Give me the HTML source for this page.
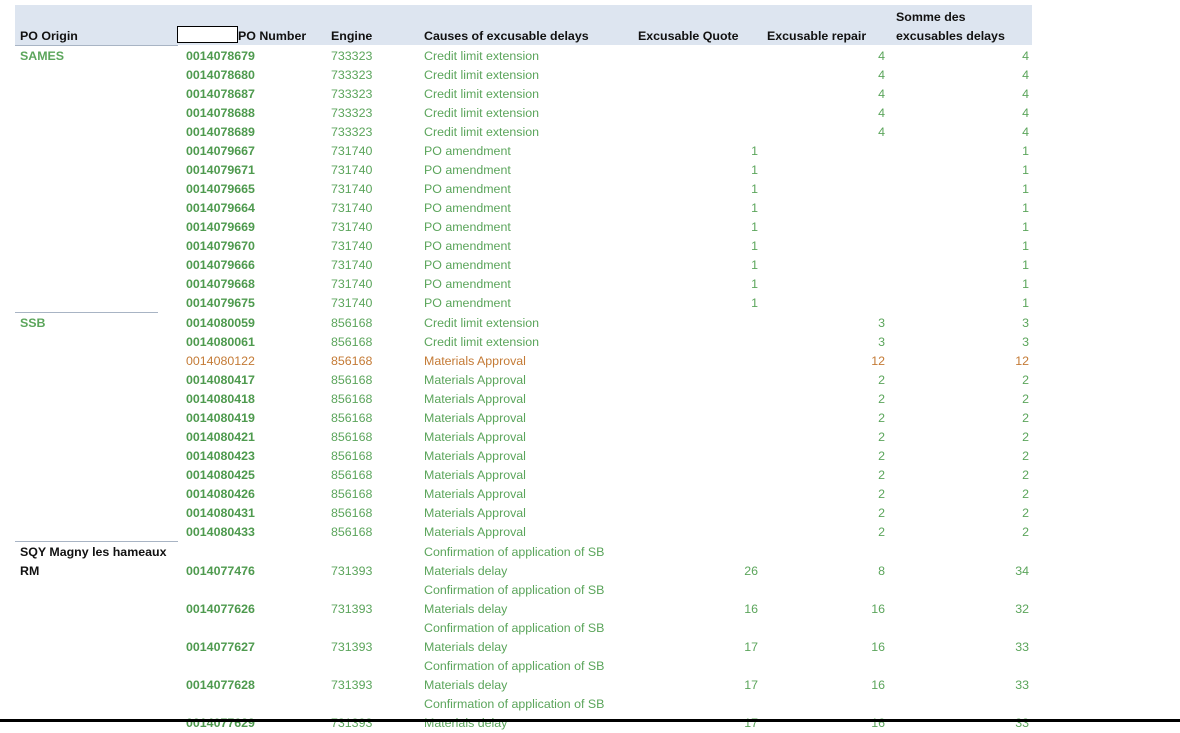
<!DOCTYPE html>
<html><head><meta charset="utf-8"><style>
body{margin:0;width:1180px;height:722px;overflow:hidden;background:#fff;font-family:"Liberation Sans",sans-serif;font-size:12.4px;position:relative}
.hd{position:absolute;left:15px;top:5px;width:1017px;height:40px;background:#dde5f0}
.w{position:absolute;left:0;top:2px;width:1180px;height:722px}
.r{position:absolute;left:0;width:1180px;height:19px;line-height:19px;color:#5ba55b}
.r span{position:absolute;white-space:nowrap}
.o{left:20px;font-weight:bold}
.n{left:186px;font-weight:bold;color:#4e9a4e}
.e{left:331px}.c{left:424px}
.q{right:422px}.p{right:295px}.s{right:151px}
.h{color:#111;font-weight:bold}
.h .n{color:#111}
.or{color:#c47a35}.or .n{color:#c47a35;font-weight:normal}
.k{color:#111}
.ln{position:absolute;height:1px;background:#a8b4c4;left:15px}
</style></head><body>
<div class="hd"></div>
<div class="w">
<div class="r h" style="top:6px"><span style="left:896px">Somme des</span></div>
<div class="r h" style="top:25px"><span class="o">PO Origin</span><span style="left:238px">PO Number</span><span class="e">Engine</span><span class="c">Causes of excusable delays</span><span style="left:638px">Excusable Quote</span><span style="left:767px">Excusable repair</span><span style="left:896px">excusables delays</span></div>
<div style="position:absolute;left:177px;top:24px;width:59px;height:15px;border:1px solid #000;background:#fff"></div>
<div class="ln" style="top:43px;width:163px"></div>
<div class="r" style="top:45px"><span class="o">SAMES</span><span class="n">0014078679</span><span class="e">733323</span><span class="c">Credit limit extension</span><span class="p">4</span><span class="s">4</span></div>
<div class="r" style="top:64px"><span class="n">0014078680</span><span class="e">733323</span><span class="c">Credit limit extension</span><span class="p">4</span><span class="s">4</span></div>
<div class="r" style="top:83px"><span class="n">0014078687</span><span class="e">733323</span><span class="c">Credit limit extension</span><span class="p">4</span><span class="s">4</span></div>
<div class="r" style="top:102px"><span class="n">0014078688</span><span class="e">733323</span><span class="c">Credit limit extension</span><span class="p">4</span><span class="s">4</span></div>
<div class="r" style="top:121px"><span class="n">0014078689</span><span class="e">733323</span><span class="c">Credit limit extension</span><span class="p">4</span><span class="s">4</span></div>
<div class="r" style="top:140px"><span class="n">0014079667</span><span class="e">731740</span><span class="c">PO amendment</span><span class="q">1</span><span class="s">1</span></div>
<div class="r" style="top:159px"><span class="n">0014079671</span><span class="e">731740</span><span class="c">PO amendment</span><span class="q">1</span><span class="s">1</span></div>
<div class="r" style="top:178px"><span class="n">0014079665</span><span class="e">731740</span><span class="c">PO amendment</span><span class="q">1</span><span class="s">1</span></div>
<div class="r" style="top:197px"><span class="n">0014079664</span><span class="e">731740</span><span class="c">PO amendment</span><span class="q">1</span><span class="s">1</span></div>
<div class="r" style="top:216px"><span class="n">0014079669</span><span class="e">731740</span><span class="c">PO amendment</span><span class="q">1</span><span class="s">1</span></div>
<div class="r" style="top:235px"><span class="n">0014079670</span><span class="e">731740</span><span class="c">PO amendment</span><span class="q">1</span><span class="s">1</span></div>
<div class="r" style="top:254px"><span class="n">0014079666</span><span class="e">731740</span><span class="c">PO amendment</span><span class="q">1</span><span class="s">1</span></div>
<div class="r" style="top:273px"><span class="n">0014079668</span><span class="e">731740</span><span class="c">PO amendment</span><span class="q">1</span><span class="s">1</span></div>
<div class="r" style="top:292px"><span class="n">0014079675</span><span class="e">731740</span><span class="c">PO amendment</span><span class="q">1</span><span class="s">1</span></div>
<div class="ln" style="top:310px;width:143px"></div>
<div class="r" style="top:312px"><span class="o">SSB</span><span class="n">0014080059</span><span class="e">856168</span><span class="c">Credit limit extension</span><span class="p">3</span><span class="s">3</span></div>
<div class="r" style="top:331px"><span class="n">0014080061</span><span class="e">856168</span><span class="c">Credit limit extension</span><span class="p">3</span><span class="s">3</span></div>
<div class="r or" style="top:350px"><span class="n">0014080122</span><span class="e">856168</span><span class="c">Materials Approval</span><span class="p">12</span><span class="s">12</span></div>
<div class="r" style="top:369px"><span class="n">0014080417</span><span class="e">856168</span><span class="c">Materials Approval</span><span class="p">2</span><span class="s">2</span></div>
<div class="r" style="top:388px"><span class="n">0014080418</span><span class="e">856168</span><span class="c">Materials Approval</span><span class="p">2</span><span class="s">2</span></div>
<div class="r" style="top:407px"><span class="n">0014080419</span><span class="e">856168</span><span class="c">Materials Approval</span><span class="p">2</span><span class="s">2</span></div>
<div class="r" style="top:426px"><span class="n">0014080421</span><span class="e">856168</span><span class="c">Materials Approval</span><span class="p">2</span><span class="s">2</span></div>
<div class="r" style="top:445px"><span class="n">0014080423</span><span class="e">856168</span><span class="c">Materials Approval</span><span class="p">2</span><span class="s">2</span></div>
<div class="r" style="top:464px"><span class="n">0014080425</span><span class="e">856168</span><span class="c">Materials Approval</span><span class="p">2</span><span class="s">2</span></div>
<div class="r" style="top:483px"><span class="n">0014080426</span><span class="e">856168</span><span class="c">Materials Approval</span><span class="p">2</span><span class="s">2</span></div>
<div class="r" style="top:502px"><span class="n">0014080431</span><span class="e">856168</span><span class="c">Materials Approval</span><span class="p">2</span><span class="s">2</span></div>
<div class="r" style="top:521px"><span class="n">0014080433</span><span class="e">856168</span><span class="c">Materials Approval</span><span class="p">2</span><span class="s">2</span></div>
<div class="ln" style="top:539px;width:163px"></div>
<div class="r" style="top:541px"><span class="o k">SQY Magny les hameaux</span><span class="c">Confirmation of application of SB</span></div>
<div class="r" style="top:560px"><span class="o k">RM</span><span class="n">0014077476</span><span class="e">731393</span><span class="c">Materials delay</span><span class="q">26</span><span class="p">8</span><span class="s">34</span></div>
<div class="r" style="top:579px"><span class="c">Confirmation of application of SB</span></div>
<div class="r" style="top:598px"><span class="n">0014077626</span><span class="e">731393</span><span class="c">Materials delay</span><span class="q">16</span><span class="p">16</span><span class="s">32</span></div>
<div class="r" style="top:617px"><span class="c">Confirmation of application of SB</span></div>
<div class="r" style="top:636px"><span class="n">0014077627</span><span class="e">731393</span><span class="c">Materials delay</span><span class="q">17</span><span class="p">16</span><span class="s">33</span></div>
<div class="r" style="top:655px"><span class="c">Confirmation of application of SB</span></div>
<div class="r" style="top:674px"><span class="n">0014077628</span><span class="e">731393</span><span class="c">Materials delay</span><span class="q">17</span><span class="p">16</span><span class="s">33</span></div>
<div class="r" style="top:693px"><span class="c">Confirmation of application of SB</span></div>
<div class="r" style="top:712px"><span class="n">0014077629</span><span class="e">731393</span><span class="c">Materials delay</span><span class="q">17</span><span class="p">16</span><span class="s">33</span></div>
</div>
<div style="position:absolute;left:0;top:719px;width:1180px;height:3px;background:#000"></div>
</body></html>
